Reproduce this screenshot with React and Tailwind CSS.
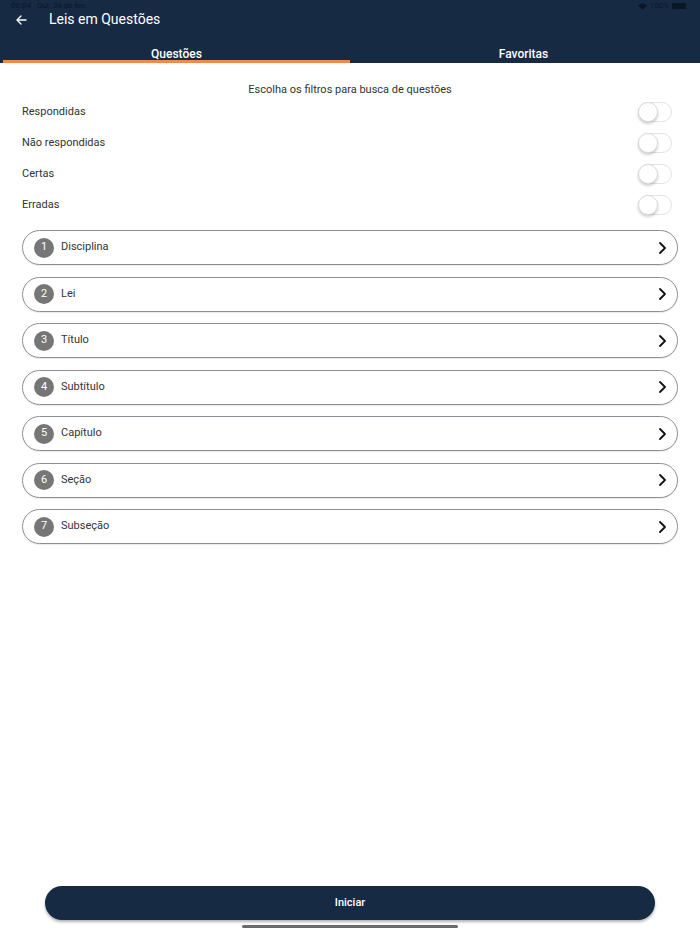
import React from "react";

const filters = ["Respondidas", "Não respondidas", "Certas", "Erradas"];
const items = ["Disciplina", "Lei", "Título", "Subtítulo", "Capítulo", "Seção", "Subseção"];

function Toggle() {
  return (
    <div className="relative w-[34px] h-[20px] rounded-full border border-[#e3e3e3] bg-white">
      <div className="absolute left-[-1px] top-[-1px] w-[20px] h-[20px] rounded-full bg-white border border-[#dcdcdc] shadow-[0_2px_3px_rgba(0,0,0,0.2)]" />
    </div>
  );
}

export default function App() {
  return (
    <div className="w-[700px] h-[934px] bg-white flex flex-col relative overflow-hidden" style={{ fontFamily: "Roboto, 'Liberation Sans', sans-serif" }}>
      <div className="bg-[#172a43] h-[63px] flex flex-col">
        <div className="h-[10px] flex items-start justify-between px-[11px] pt-[1px] text-[8px] leading-[10px] text-[#0b1626]">
          <div className="flex gap-[6px]"><span>00:04</span><span>Qui. 24 de fev.</span></div>
          <div className="flex items-center gap-[3px] pr-[3px]">
            <svg width="9" height="7" viewBox="0 0 12 9"><path d="M6 9L0 3a8.5 8.5 0 0112 0z" fill="#0b1626" /></svg>
            <span>100%</span>
            <div className="w-[14px] h-[6px] rounded-[1px] bg-[#0b1626]" />
          </div>
        </div>
        <div className="flex items-center h-[19px] pl-[15px]">
          <svg width="13" height="12" viewBox="0 0 24 24" fill="none" stroke="white" strokeWidth="2.6" strokeLinecap="round" strokeLinejoin="round">
            <path d="M21 12H4" /><path d="M11 4l-8 8 8 8" />
          </svg>
          <span className="ml-[21px] text-white text-[14px]">Leis em Questões</span>
        </div>
        <div className="flex-1 flex items-end">
          <div className="flex-1 ml-[3px] flex flex-col items-center">
            <span className="text-white text-[12px] font-medium leading-[10px] mb-[1px]">Questões</span>
            <div className="h-[3px] w-full bg-[#f08a4b]" />
          </div>
          <div className="flex-1 mr-[3px] flex flex-col items-center">
            <span className="text-white text-[12px] font-medium leading-[10px] mb-[1px]">Favoritas</span>
            <div className="h-[3px] w-full" />
          </div>
        </div>
      </div>

      <div className="text-center text-[11px] text-[#333] mt-[20px] leading-[14px]">Escolha os filtros para busca de questões</div>

      <div className="flex flex-col mt-[5px] px-[22px] pr-[28px] gap-[11px]">
        {filters.map((f) => (
          <div key={f} className="flex items-center justify-between h-[20px]">
            <span className="text-[11px] text-[#333]">{f}</span>
            <Toggle />
          </div>
        ))}
      </div>

      <div className="flex flex-col mt-[15px] px-[22px] gap-[11.5px]">
        {items.map((it, i) => (
          <div key={it} className="h-[35px] rounded-full border border-[#8a8f96] flex items-center pl-[11px] pr-[10px] shadow-[0_1px_0_rgba(0,0,0,0.08)]">
            <div className="w-[20px] h-[20px] rounded-full bg-[#767676] text-white text-[11px] flex items-center justify-center">{i + 1}</div>
            <span className="ml-[7px] text-[11px] text-[#333] flex-1">{it}</span>
            <svg width="10" height="14" viewBox="0 0 10 14" fill="none" stroke="#111" strokeWidth="1.8" strokeLinecap="round" strokeLinejoin="round">
              <path d="M3 2l5 5-5 5" />
            </svg>
          </div>
        ))}
      </div>

      <div className="flex-1" />
      <div className="px-[45px]">
        <div className="h-[34px] rounded-full bg-[#172a43] flex items-center justify-center shadow-[0_2px_3px_rgba(0,0,0,0.3)]">
          <span className="text-white text-[11px] font-medium">Iniciar</span>
        </div>
      </div>
      <div className="flex justify-center mt-[5px] mb-[6px]">
        <div className="w-[216px] h-[3px] rounded-full bg-[#6a6a6a]" />
      </div>
    </div>
  );
}
